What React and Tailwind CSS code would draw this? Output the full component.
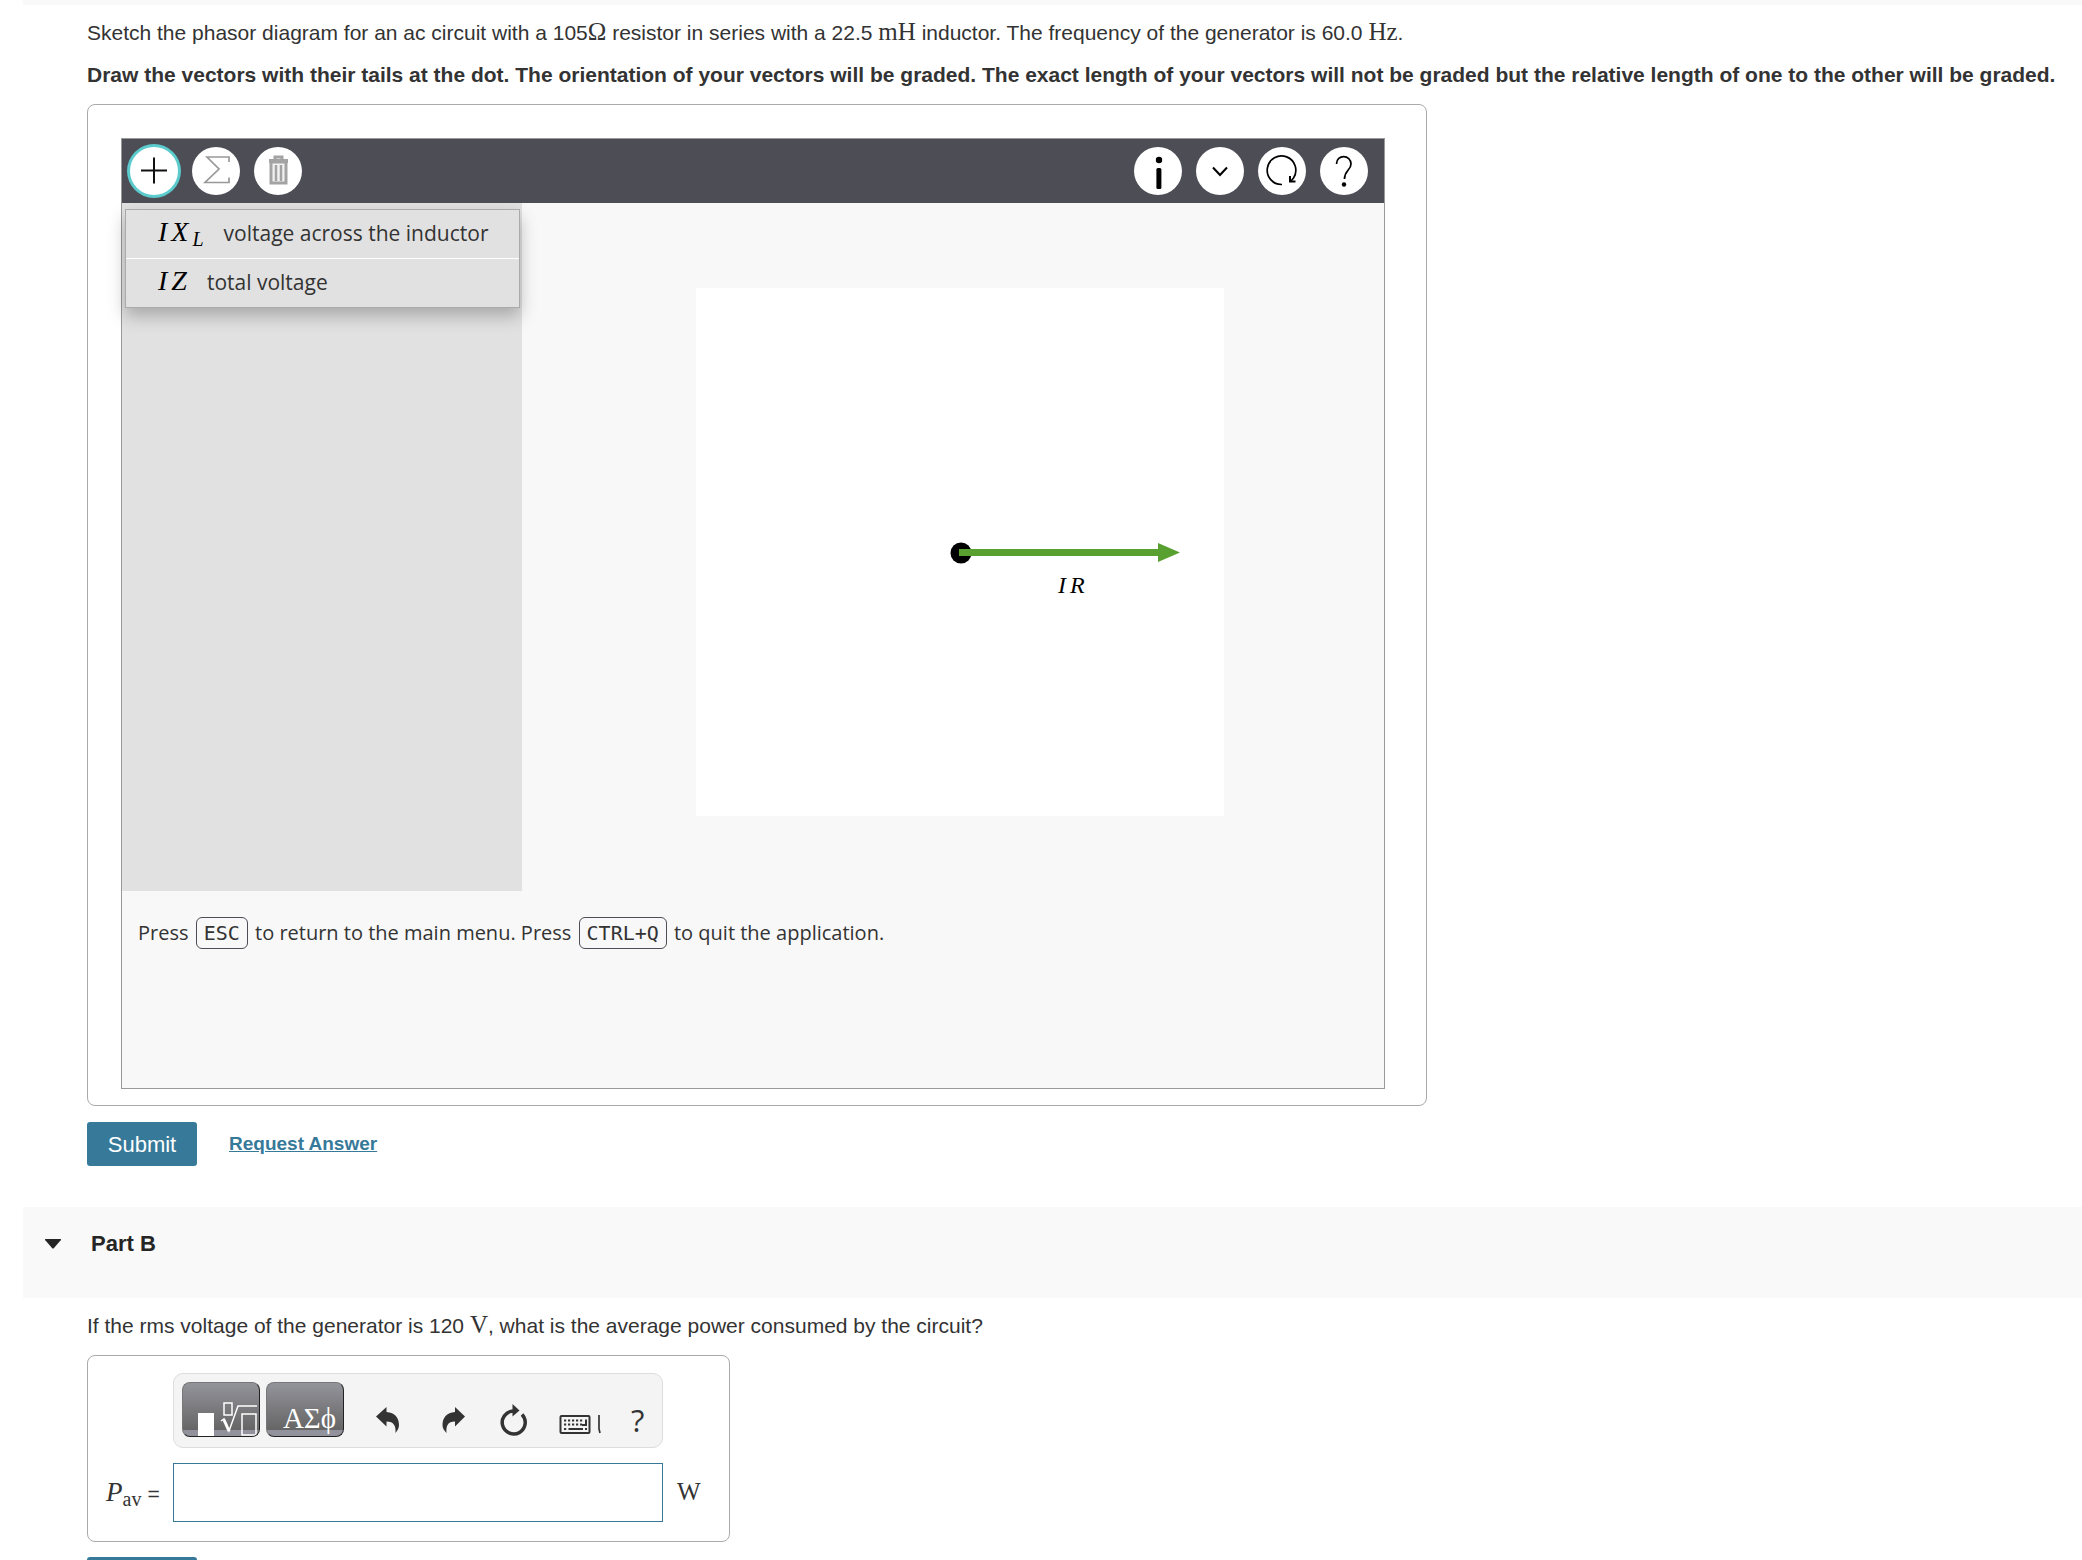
import React, { useState } from 'react';

const vectors = [
  { id: 'inductor', symbol: ['I', 'X'], sub: 'L', description: 'voltage across the inductor' },
  { id: 'total', symbol: ['I', 'Z'], sub: '', description: 'total voltage' }
];

const Unit = ({ children }) => (
  <span className="font-['Liberation_Serif',serif] text-[25px] leading-none">{children}</span>
);

const RoundButton = ({ label, active, children }) => (
  <button
    type="button"
    aria-label={label}
    className={`flex h-12 w-12 items-center justify-center rounded-full bg-white ${active ? 'ring-[3px] ring-[#5bcbcd]' : ''}`}
  >
    <svg viewBox="0 0 48 48" className="h-12 w-12" fill="none" stroke="#000" strokeWidth="2">
      {children}
    </svg>
  </button>
);

const DrawingToolbar = () => (
  <div className="flex h-16 items-center justify-between bg-[#4c4d55] pr-4 pl-2">
    <div className="flex gap-[14px]">
      <RoundButton label="Add vector" active>
        <path d="M24 10.500v26M11 23.500h26" stroke="#111" />
      </RoundButton>
      <RoundButton label="Add vector sum">
        <path d="M37 15v-5H15l12 12-14 13.500h24v-5" stroke="#999" strokeWidth="1.700" />
      </RoundButton>
      <RoundButton label="Delete">
        <g stroke="#a3a3a3">
          <path d="M21 12v-2h7v2" strokeWidth="3" />
          <path d="M15 14h19" strokeWidth="4" />
          <path d="M17 15v21h15V15z" strokeWidth="3" fill="#f1f1f1" />
          <path d="M22 18v16M27 18v16" strokeWidth="2.500" />
        </g>
      </RoundButton>
    </div>
    <div className="flex gap-[14px]">
      <RoundButton label="Information">
        <circle cx="25" cy="13" r="3.200" fill="#000" stroke="none" />
        <rect x="22.400" y="21" width="5" height="21" rx="1.500" fill="#000" stroke="none" />
      </RoundButton>
      <RoundButton label="More options">
        <path d="M17 20.500l7 7.500 7-7.500" />
      </RoundButton>
      <RoundButton label="Reset">
        <path d="M24 37.500A14.300 14.300 0 1 1 35.500 31L33 34" strokeWidth="1.700" />
        <path d="M32 29v5.500h5.500" />
      </RoundButton>
      <RoundButton label="Help">
        <path d="M16.500 17c0-10 14.500-9.500 14.500 0 0 6-6.500 6.500-6.500 15" strokeWidth="1.700" />
        <circle cx="24" cy="37.500" r="2.200" fill="#000" stroke="none" />
      </RoundButton>
    </div>
  </div>
);

const VectorMenu = () => (
  <ul className="divide-y divide-white border border-[#aaa] bg-[#e1e1e1] shadow-[0_8px_16px_rgba(0,0,0,0.25)]">
    {vectors.map(vector => (
      <li key={vector.id}>
        <button type="button" className="flex h-12 w-full items-baseline gap-5 pt-[6px] pl-8 text-[21px] leading-8 text-[#333]">
          <span className="flex items-baseline gap-1 font-['Liberation_Serif',serif] text-[28px] text-black italic">
            {vector.symbol.map(letter => <span key={letter}>{letter}</span>)}
            {vector.sub && <sub className="text-[20px]">{vector.sub}</sub>}
          </span>
          <span className="font-['Open_Sans',sans-serif]">{vector.description}</span>
        </button>
      </li>
    ))}
  </ul>
);

const PhasorCanvas = () => (
  <svg viewBox="0 0 528 528" className="block h-[528px] w-[528px] bg-white">
    <circle cx="265" cy="265" r="10.500" fill="#000" />
    <path d="M263 264.500h200" stroke="#58a030" strokeWidth="7" />
    <path d="M462 255v19l22-9.500z" fill="#58a030" />
    <g className="font-['Liberation_Serif',serif] text-[24px] italic">
      <text x="362" y="305">I</text>
      <text x="374" y="305">R</text>
    </g>
  </svg>
);

const Key = ({ children }) => (
  <kbd className="mx-[2px] rounded-md border border-[#4c4d55] px-[7px] py-[3px] font-['DejaVu_Sans_Mono',monospace] text-[20px]">{children}</kbd>
);

const DrawingTool = () => (
  <div className="h-[951px] border border-[#999] bg-[#f8f8f8]">
    <DrawingToolbar />
    <div className="flex h-[688px]">
      <div className="w-[400px] shrink-0 bg-[#e1e1e1] pt-[6px] pr-[2px] pl-[3px]">
        <VectorMenu />
      </div>
      <div className="flex flex-1 justify-center pt-[85px] pl-[14px]">
        <PhasorCanvas />
      </div>
    </div>
    <p className="px-4 pt-6 font-['Open_Sans',sans-serif] text-[20px] leading-9 text-[#333]">
      Press <Key>ESC</Key> to return to the main menu. Press <Key>CTRL+Q</Key> to quit the application.
    </p>
  </div>
);

const TemplateButton = ({ label, children }) => (
  <button
    type="button"
    aria-label={label}
    className="flex h-[55px] w-[78px] items-end overflow-hidden rounded-lg border border-t-[#777] border-r-[#222] border-b-[#222] border-l-[#777] bg-[linear-gradient(#93939b,#666_88%,#92929c_89%,#92929c)]"
  >
    {children}
  </button>
);

const EquationToolbar = () => (
  <div className="flex h-[75px] rounded-[10px] border border-[#ddd] bg-[#f4f4f4] pt-2 pl-2">
    <div className="flex gap-[6px]">
      <TemplateButton label="Templates">
        <svg viewBox="0 0 76 53" className="h-[53px] w-[76px]" fill="none" stroke="#fff" strokeWidth="1.500">
          <path d="M15 30h16v23H15z" fill="#fff" stroke="none" />
          <path d="M41 20h8v12h-8zM59 31h14v21H59z" />
          <path d="M38 38l3-2 5 12 9-25h19" />
          <path d="M41 37l5 11" strokeWidth="3" />
        </svg>
      </TemplateButton>
      <TemplateButton label="Symbols">
        <span className="w-full pr-[7px] text-right font-['Liberation_Serif',serif] text-[29px] leading-9 text-white">ΑΣϕ</span>
      </TemplateButton>
    </div>
    <div className="flex items-start pt-[22px] text-[#333]">
      <button type="button" aria-label="Undo" className="ml-8">
        <svg viewBox="0 0 24 32" className="h-8 w-6" fill="currentColor">
          <path d="M0 12.500L10.500 3v5C19 8.500 23 14 23 21c0 3-1.500 5.500-3.500 8 .5-7-1.500-11.500-9-11.500v5z" />
        </svg>
      </button>
      <button type="button" aria-label="Redo" className="ml-[42px]">
        <svg viewBox="0 0 24 32" className="h-8 w-6" fill="currentColor">
          <path d="M23 12.500L13 3v5C4.500 8.500.500 14 .500 21c0 3 1.500 5.500 4 8C4 22 5.500 17.500 13 17.500v5z" />
        </svg>
      </button>
      <button type="button" aria-label="Reset" className="ml-[33px]">
        <svg viewBox="0 0 28 32" className="h-8 w-7">
          <path d="M14 7A11.500 11.500 0 1 0 23 10.500" fill="none" stroke="currentColor" strokeWidth="3.500" />
          <path d="M13.500 0l7 6.500-7 6z" fill="currentColor" />
        </svg>
      </button>
      <button type="button" aria-label="Keyboard shortcuts" className="ml-8">
        <svg viewBox="0 0 42 32" className="h-8 w-[42px]" fill="none" stroke="currentColor" strokeWidth="2">
          <rect x="1.500" y="12" width="29" height="17" rx="1" />
          <path d="M5 16.500h19M5 20.500h18M5 25h2.500M26 25h2" strokeDasharray="2.200 1.800" />
          <path d="M27 15.500V21h-4M9.500 25H24" />
          <path d="M40 11v14l1 4" strokeWidth="1.700" />
        </svg>
      </button>
      <button type="button" aria-label="Help" className="ml-[30px] font-['Open_Sans',sans-serif] text-[31px] leading-8">?</button>
    </div>
  </div>
);

const SubmitButton = () => (
  <button type="submit" className="h-11 w-[110px] rounded-[3px] bg-[#367999] text-[22px] text-white">
    Submit
  </button>
);

const App = () => {
  const [power, setPower] = useState('');

  return (
    <div className="bg-white font-['Liberation_Sans',sans-serif] text-[#333]">
      <div className="ml-[23px] h-[5px] bg-[#f9f9f9]" />

      <section className="pt-[10px] pl-[87px]">
        <p className="text-[21px] leading-9">
          Sketch the phasor diagram for an ac circuit with a 105<Unit>Ω</Unit> resistor in series with a 22.5 <Unit>mH</Unit> inductor. The frequency of the generator is 60.0 <Unit>Hz</Unit>.
        </p>
        <p className="mt-[6px] text-[21px] leading-9 font-bold">
          Draw the vectors with their tails at the dot. The orientation of your vectors will be graded. The exact length of your vectors will not be graded but the relative length of one to the other will be graded.
        </p>
        <div className="mt-[11px] max-w-[1340px] rounded-lg border border-[#aaa] pt-[33px] pr-[41px] pb-4 pl-[33px]">
          <DrawingTool />
        </div>
        <div className="mt-4 flex items-center gap-8">
          <SubmitButton />
          <a href="#answer" className="text-[19px] font-bold text-[#367999] underline">Request Answer</a>
        </div>
      </section>

      <header className="mt-[41px] ml-[23px] flex h-[91px] items-start gap-[30px] bg-[#f9f9f9] pt-[21px] pl-[22px]">
        <svg viewBox="0 0 16 32" className="h-8 w-4">
          <path d="M0 11h16q0 2-1 2l-6 7q-1 1-2 0l-6-7q-1 0-1-2z" fill="#252525" />
        </svg>
        <h2 className="text-[22px] leading-8 font-bold text-[#252525]">Part B</h2>
      </header>

      <section className="pt-[10px] pl-[87px]">
        <p className="text-[21px] leading-9">
          If the rms voltage of the generator is 120 <Unit>V</Unit>, what is the average power consumed by the circuit?
        </p>
        <div className="mt-[11px] max-w-[643px] rounded-lg border border-[#aaa] pt-[17px] pb-[19px] pl-[18px]">
          <div className="ml-[67px] w-[490px]">
            <EquationToolbar />
          </div>
          <div className="mt-[15px] flex items-center">
            <label htmlFor="power" className="flex w-[67px] items-baseline text-[21px]">
              <span className="font-['Liberation_Serif',serif] text-[27px] italic">P</span>
              <sub className="font-['Liberation_Serif',serif] text-[20px]">av</sub>
              <span className="ml-[6px]">=</span>
            </label>
            <input
              id="power"
              value={power}
              onChange={e => setPower(e.target.value)}
              className="h-[59px] w-[490px] border border-[#367999] px-3 text-[24px] outline-none"
            />
            <span className="ml-[14px]"><Unit>W</Unit></span>
          </div>
        </div>
        <div className="mt-[15px]">
          <SubmitButton />
        </div>
      </section>
    </div>
  );
};

export default App;
